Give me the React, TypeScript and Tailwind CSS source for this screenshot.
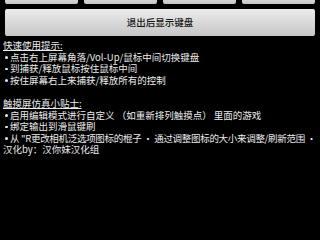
import React from "react";

const font = { fontFamily: '"Noto Sans CJK SC", "Noto Sans", sans-serif' };

function Bullet({ children, tight }: { children: React.ReactNode; tight?: boolean }) {
  return (
    <div className="flex h-[11.6px] items-center whitespace-nowrap">
      <div className="w-[7px] flex justify-start pl-[2px]">
        <div className="w-[2.5px] h-[2.5px] rounded-full bg-[#e8e8e8]" />
      </div>
      <span className={tight ? "tracking-[-0.3px]" : ""}>{children}</span>
    </div>
  );
}

export default function App() {
  return (
    <div
      className="w-[320px] h-[240px] overflow-hidden bg-black text-[#ececec] text-[9.5px] leading-[11.6px]"
      style={font}
    >
      <div className="grid grid-cols-4 gap-[6px] px-[5px]">
        {[0, 1, 2, 3].map((i) => (
          <div
            key={i}
            className="h-[4px] rounded-b-[2px] bg-gradient-to-b from-[#d4d4d4] to-[#c4c4c4]"
          />
        ))}
      </div>
      <div className="mx-[5px] mt-[5px] h-[27px] rounded-[2px] bg-gradient-to-b from-[#ececec] to-[#c6c6c6] flex items-center justify-center text-[#141414] text-[9.5px] font-medium">
        退出后显示键盘
      </div>
      <div className="pl-[3px] pt-[4px]">
        <div className="h-[11.6px] flex items-center">
          <span className="underline underline-offset-[1px]">快速使用提示:</span>
        </div>
        <Bullet>点击右上屏幕角落/Vol-Up/鼠标中间切换键盘</Bullet>
        <Bullet>到捕获/释放鼠标按住鼠标中间</Bullet>
        <Bullet>按住屏幕右上来捕获/释放所有的控制</Bullet>
        <div className="h-[11.6px]" />
        <div className="h-[11.6px] flex items-center">
          <span className="underline underline-offset-[1px]">触摸屏仿真小贴士:</span>
        </div>
        <Bullet>启用编辑模式进行自定义 （如重新排列触摸点） 里面的游戏</Bullet>
        <Bullet>绑定输出到滑鼠键刷</Bullet>
        <Bullet tight>从 "R更改相机泛选项图标的棍子 • 通过调整图标的大小来调整/刷新范围 •</Bullet>
        <div className="h-[11.6px] flex items-center whitespace-nowrap">汉化by：汉你妹汉化组</div>
      </div>
    </div>
  );
}
